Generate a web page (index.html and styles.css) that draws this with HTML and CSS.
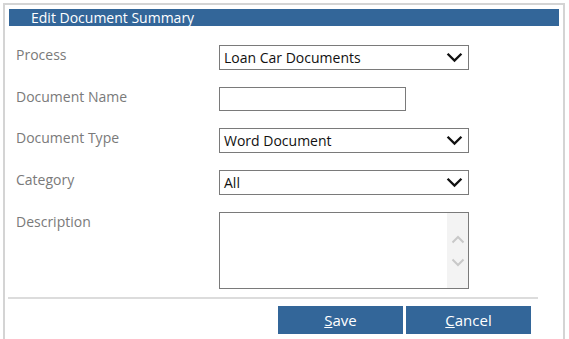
FILE: index.html
```html
<html>
<head><title>Edit Document Summary</title>
<meta content="text/html;charset=utf-8" http-equiv="Content-Type" />
<link rel="stylesheet" href="styles.css">
</head>
<body>
<div class="panel">
	<div class="header">Edit Document Summary</div>
	<div class="form">
		<div class="label">Process</div>
		<div class="pick wide">
			<span class="value">Loan Car Documents</span>
			<svg class="chev" width="16" height="10" viewBox="0 0 16 10"><path d="M1.5 1.5 L8 8 L14.5 1.5" fill="none" stroke="#111" stroke-width="2.2"/></svg>
		</div>

		<div class="label">Document Name</div>
		<div><input class="text" type="text"></div>

		<div class="label">Document Type</div>
		<div class="pick wide">
			<span class="value">Word Document</span>
			<svg class="chev" width="16" height="10" viewBox="0 0 16 10"><path d="M1.5 1.5 L8 8 L14.5 1.5" fill="none" stroke="#111" stroke-width="2.2"/></svg>
		</div>

		<div class="label">Category</div>
		<div class="pick wide">
			<span class="value">All</span>
			<svg class="chev" width="16" height="10" viewBox="0 0 16 10"><path d="M1.5 1.5 L8 8 L14.5 1.5" fill="none" stroke="#111" stroke-width="2.2"/></svg>
		</div>

		<div class="label">Description</div>
		<div class="memo wide">
			<textarea></textarea>
			<div class="scroll">
				<svg width="14" height="9" viewBox="0 0 14 9"><path d="M1.5 7.5 L7 2 L12.5 7.5" fill="none" stroke="#c8c8c8" stroke-width="2"/></svg>
				<svg width="14" height="9" viewBox="0 0 14 9"><path d="M1.5 1.5 L7 7 L12.5 1.5" fill="none" stroke="#c8c8c8" stroke-width="2"/></svg>
			</div>
		</div>
	</div>
	<div class="rule"></div>
	<div class="buttons">
		<button><u>S</u>ave</button>
		<button><u>C</u>ancel</button>
	</div>
</div>
</body>
</html>
```
FILE: styles.css
```css
body{
	padding:0;
	margin:0;
	background-color:white;
	font-family: "Open Sans", "Noto Sans", arial, sans-serif;
	font-size:14px;
	overflow:hidden;
}

.panel{
	margin:3px 0 0 3px;
	width:562px;
	height:340px;
	border:2px solid #d4d4d4;
	border-bottom:0;
	padding:4px 0 0 4px;
	box-sizing:border-box;
}

.header{
	width:550px;
	height:17px;
	background-color:#336699;
	color:white;
	line-height:17px;
	padding-left:22px;
	box-sizing:border-box;
	font-size:14px;
}

.form{
	display:grid;
	grid-template-columns:203px auto;
	row-gap:17px;
	margin:19px 0 0 7px;
}

.label{
	color:#7a7a7a;
	margin-top:1px;
	line-height:18px;
}

.pick{
	height:25px;
	border:1px solid #7a7a7a;
	box-sizing:border-box;
	display:flex;
	align-items:center;
	justify-content:space-between;
	padding:0 5px 0 4px;
	color:#111;
}

.wide{
	width:250px;
}

.value{
	line-height:23px;
}

.chev{
	width:17px;
	height:11px;
}

.text{
	width:187px;
	height:24px;
	border:1px solid #7a7a7a;
	box-sizing:border-box;
	margin:0;
	padding:0 4px;
	display:block;
}

.memo{
	height:77px;
	border:1px solid #7a7a7a;
	box-sizing:border-box;
	display:flex;
}

textarea{
	flex:1;
	border:0;
	margin:0;
	padding:2px 4px;
	resize:none;
	outline:none;
}

.scroll{
	width:21px;
	background-color:#f3f3f3;
	display:flex;
	flex-direction:column;
	align-items:center;
	justify-content:center;
	gap:14px;
}

.rule{
	width:530px;
	height:2px;
	background-color:#dcdcdc;
	margin:8px 0 0 -1px;
}

.buttons{
	display:flex;
	gap:3px;
	margin:7px 0 0 269px;
}

button{
	width:125px;
	height:28px;
	border:0;
	margin:0;
	padding:0;
	background-color:#336699;
	color:white;
	font-family: "Open Sans", "Noto Sans", arial, sans-serif;
	font-size:15px;
	cursor:pointer;
}
```
